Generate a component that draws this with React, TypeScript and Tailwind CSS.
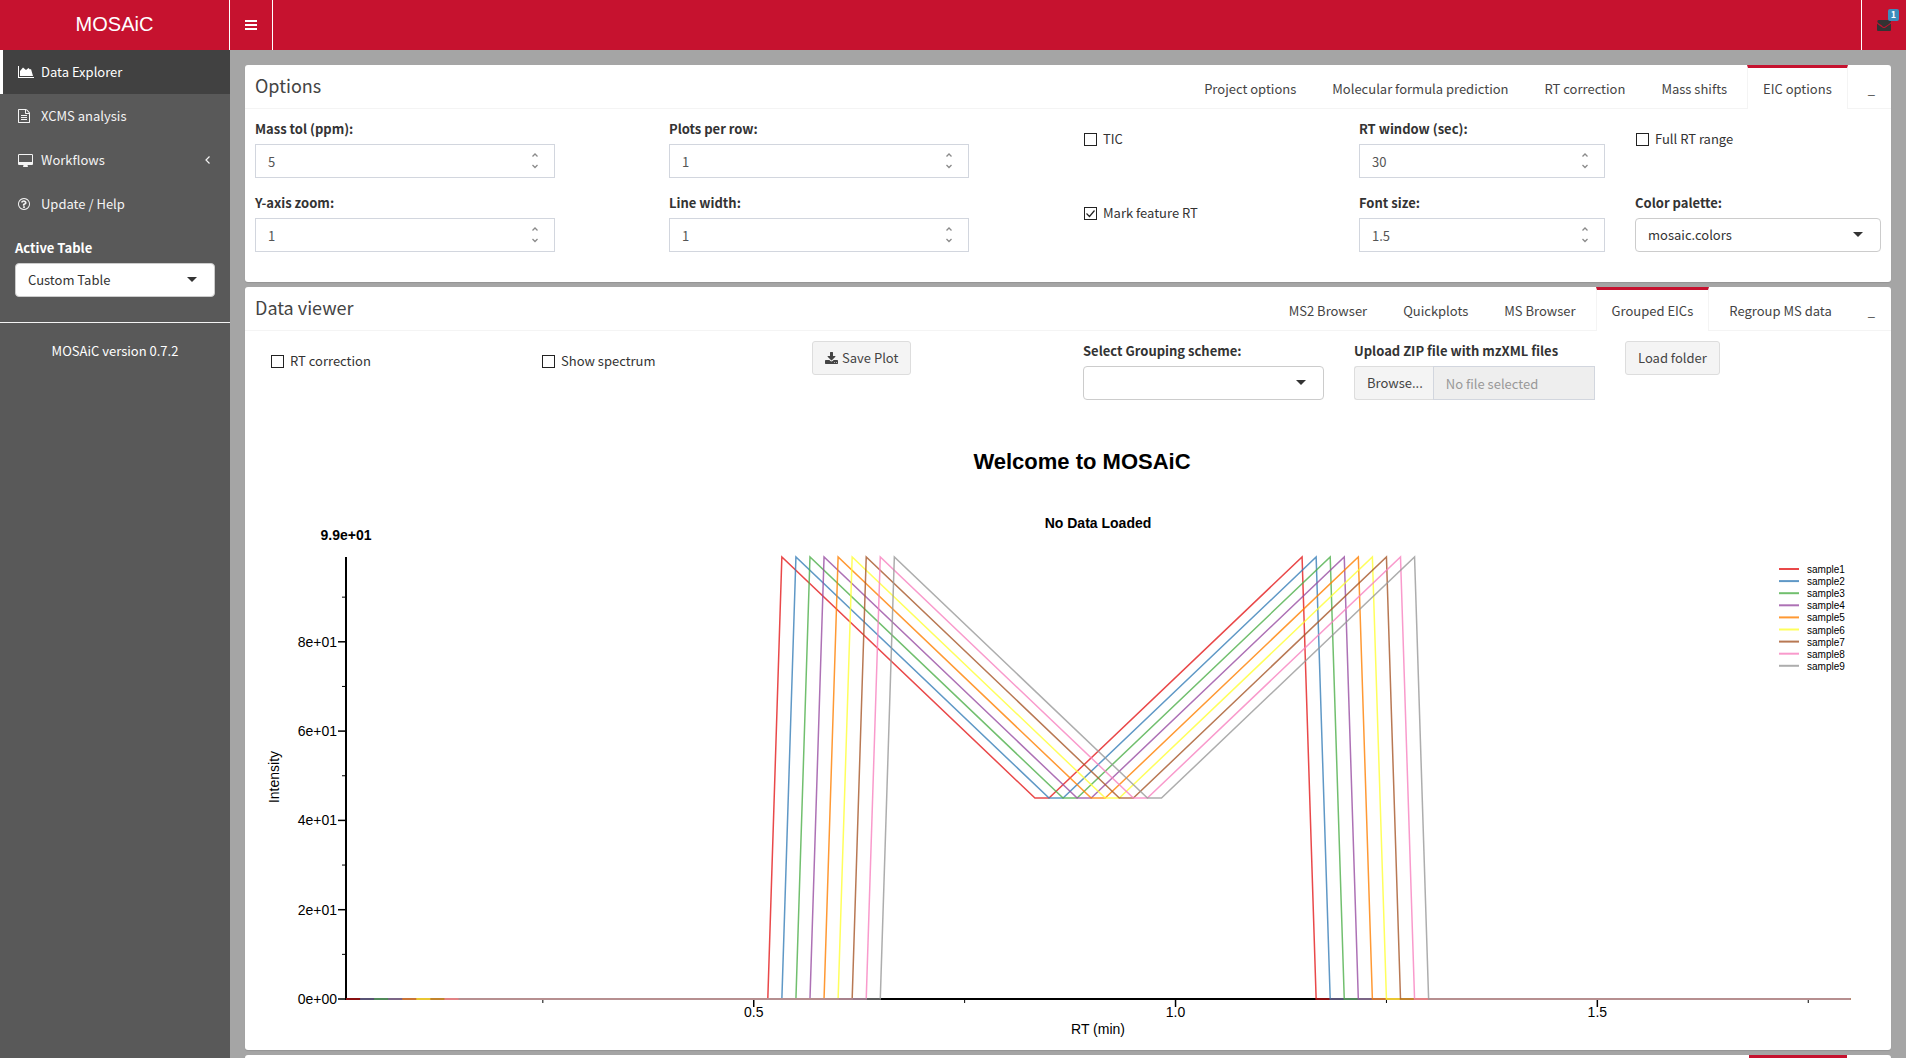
import { useState } from "react";
import clsx from "clsx";

type Sample = {
  name: string,
  color: string,
}

const samples: Sample[] = [
  { name: "sample1", color: "#e41a1c" },
  { name: "sample2", color: "#377eb8" },
  { name: "sample3", color: "#4daf4a" },
  { name: "sample4", color: "#984ea3" },
  { name: "sample5", color: "#ff7f00" },
  { name: "sample6", color: "#ffff33" },
  { name: "sample7", color: "#a65628" },
  { name: "sample8", color: "#f781bf" },
  { name: "sample9", color: "#999999" },
];

/* ---------- icons ---------- */

function AreaChartIcon() {
  return (
    <svg viewBox="0 0 2048 1536" className="h-3 w-4" fill="currentColor" aria-hidden="true">
      <path d="M2048 1408v128H0V0h128v1408h1920zM1664 384l256 896H256V640l384-448 384 320 320-256 192 192z" />
    </svg>
  );
}

function FileIcon() {
  return (
    <svg viewBox="0 0 1536 1792" className="h-3.5 w-3" fill="currentColor" aria-hidden="true">
      <path d="M1468 380q28 28 48 76t20 88v1152q0 40-28 68t-68 28H96q-40 0-68-28t-28-68V96q0-40 28-68T96 0h896q40 0 88 20t76 48zm-444-244v376h376q-10-29-22-41l-313-313q-12-12-41-22zm384 1528V640H992q-40 0-68-28t-28-68V128H128v1536h1280zM384 800q0-14 9-23t23-9h704q14 0 23 9t9 23v64q0 14-9 23t-23 9H416q-14 0-23-9t-9-23v-64zm736 224q14 0 23 9t9 23v64q0 14-9 23t-23 9H416q-14 0-23-9t-9-23v-64q0-14 9-23t23-9h704zm0 256q14 0 23 9t9 23v64q0 14-9 23t-23 9H416q-14 0-23-9t-9-23v-64q0-14 9-23t23-9h704z" />
    </svg>
  );
}

function DesktopIcon() {
  return (
    <svg viewBox="0 0 1920 1664" className="h-[13px] w-[15px]" fill="currentColor" aria-hidden="true">
      <path d="M1792 992V160q0-13-9.500-22.500T1760 128H160q-13 0-22.500 9.500T128 160v832q0 13 9.500 22.500t22.500 9.500h1600q13 0 22.500-9.500t9.500-22.500zm128-832v1088q0 66-47 113t-113 47h-544q0 37 16 77.500t32 71 16 43.500q0 26-19 45t-45 19H704q-26 0-45-19t-19-45q0-14 16-44t32-70 16-78H160q-66 0-113-47T0 1248V160Q0 94 47 47T160 0h1600q66 0 113 47t47 113z" />
    </svg>
  );
}

function HelpIcon() {
  return (
    <svg viewBox="0 0 1536 1536" className="h-3 w-3" fill="currentColor" aria-hidden="true">
      <path d="M880 1072v160q0 14-9 23t-23 9H688q-14 0-23-9t-9-23v-160q0-14 9-23t23-9h160q14 0 23 9t9 23zm214-474q0 50-15 90t-45.500 69-52 44-59.500 36q-32 18-46.500 28t-26 24-11.500 29v32q0 14-9 23t-23 9H646q-14 0-23-9t-9-23v-68q0-35 10.500-64.500t24-47.500 39-35.500 41-25.500 44.500-21q53-25 75-43t22-49q0-42-43.500-71.500T731 495q-56 0-95 27-29 20-80 83-9 12-25 12-11 0-19-6l-108-82q-10-7-12-20t5-23q122-192 349-192 129 0 238.500 89.500T1094 598zM768 128q-130 0-248.500 51t-204 136.500-136.500 204T128 768t51 248.500 136.500 204 204 136.500 248.500 51 248.500-51 204-136.500 136.500-204 51-248.500-51-248.500-136.500-204-204-136.500T768 128zm768 640q0 209-103 385.500T1153.500 1433 768 1536t-385.500-103T103 1153.500 0 768t103-385.500T382.500 103 768 0t385.500 103T1433 382.500 1536 768z" />
    </svg>
  );
}

function DownloadIcon() {
  return (
    <svg viewBox="0 0 1664 1536" className="h-3 w-[13px]" fill="currentColor" aria-hidden="true">
      <path d="M1280 1344q0-26-19-45t-45-19-45 19-19 45 19 45 45 19 45-19 19-45zm256 0q0-26-19-45t-45-19-45 19-19 45 19 45 45 19 45-19 19-45zm128-224v320q0 40-28 68t-68 28H96q-40 0-68-28t-28-68v-320q0-40 28-68t68-28h465l135 136q58 56 136 56t136-56l136-136h464q40 0 68 28t28 68zm-325-569q17 41-14 70l-448 448q-18 19-45 19t-45-19L339 621q-31-29-14-70 17-39 59-39h256V64q0-26 19-45t45-19h256q26 0 45 19t19 45v448h256q42 0 59 39z" />
    </svg>
  );
}

function EnvelopeIcon() {
  return (
    <svg viewBox="0 0 1792 1408" className="h-[11px] w-[14px]" fill="#333" aria-hidden="true">
      <path d="M1792 454v794q0 66-47 113t-113 47H160q-66 0-113-47T0 1248V454q44 49 101 87 362 246 497 345 57 42 92.500 65.500t94.500 48 110 24.500h2q51 0 110-24.500t94.500-48T1194 886q170-123 498-345 57-39 100-87zm0-294q0 79-49 151t-122 123q-376 261-468 325-10 7-42.500 30.500t-54 38-52 32.500-57.500 27-50 9h-2q-23 0-50-9t-57.500-27-52-32.500-54-38T681 759q-91-64-262-182.500T214 434q-62-42-117-115.500T42 182q0-78 41.500-130T202 0h1430q65 0 112.500 47t47.500 113z" />
    </svg>
  );
}

function Caret() {
  return (
    <svg viewBox="0 0 10 5" className="pointer-events-none absolute top-[14px] right-[18px] h-[5px] w-2.5" fill="#333" aria-hidden="true">
      <path d="M0 0h10L5 5z" />
    </svg>
  );
}

/* ---------- form controls ---------- */

function NumberField({ id, label, value }: { id: string, label: string, value: string }) {
  const [current, setCurrent] = useState(value);

  return (
    <div className="mb-[15px]">
      <label htmlFor={id} className="mb-[5px] block font-bold leading-5">{label}</label>
      <div className="relative">
        <input
          type="number"
          id={id}
          step="any"
          className="block h-[34px] w-full appearance-none border border-[#d2d6de] bg-white px-3 text-[#555] [appearance:textfield] [&::-webkit-inner-spin-button]:appearance-none"
          value={current}
          onChange={(e) => setCurrent(e.target.value)}
        />
        <svg viewBox="0 0 6 16" className="pointer-events-none absolute top-[9px] right-[17px] h-4 w-1.5" fill="none" stroke="#8a8a8a" strokeWidth="1.3" aria-hidden="true">
          <path d="M.5 3.500L3 1l2.500 2.500M.5 12L3 14.500 5.500 12" />
        </svg>
      </div>
    </div>
  );
}

function SelectBox({ id, options }: { id: string, options: string[] }) {
  return (
    <div className="relative">
      <select id={id} className="block h-[34px] w-full appearance-none rounded border border-[#ccc] bg-white px-3 text-[#333]">
        {options.map((option) => <option key={option}>{option}</option>)}
      </select>
      <Caret />
    </div>
  );
}

function CheckField({ id, label, defaultChecked = false }: { id: string, label: string, defaultChecked?: boolean }) {
  const [checked, setChecked] = useState(defaultChecked);

  return (
    <div className="mb-[15px] pt-2.5 pb-[29px]">
      <label htmlFor={id} className="flex h-5 items-center pl-px leading-5">
        <span className="relative mr-1.5 h-[13px] w-[13px]">
          <input
            type="checkbox"
            id={id}
            className="block h-[13px] w-[13px] appearance-none border border-[#222] bg-white"
            checked={checked}
            onChange={(e) => setChecked(e.target.checked)}
          />
          {checked && (
            <svg viewBox="0 0 13 13" className="pointer-events-none absolute inset-0" fill="none" stroke="#222" strokeWidth="1.2" aria-hidden="true">
              <path d="M2.500 6.500l3 3 5-6" />
            </svg>
          )}
        </span>
        {label}
      </label>
    </div>
  );
}

function Button({ children }: { children: React.ReactNode }) {
  return (
    <button type="button" className="flex h-[34px] items-center gap-1 rounded-[3px] border border-[#ddd] bg-[#f4f4f4] px-3 text-[#444]">
      {children}
    </button>
  );
}

/* ---------- boxes ---------- */

type TabBoxProps = {
  title: string,
  tabs: string[],
  active: string,
  children: React.ReactNode,
}

function TabBox({ title, tabs, active, children }: TabBoxProps) {
  return (
    <section className="mb-[5px] rounded-[3px] bg-white shadow-[0_1px_1px_rgba(0,0,0,0.1)]">
      <div className="flex h-11 justify-between border-b border-[#f4f4f4]">
        <h2 className="px-2.5 text-[18px] leading-10 text-[#444]">{title}</h2>
        <nav className="flex h-11 gap-1">
          {tabs.map((tab) => (
            <a
              key={tab}
              href="#"
              className={clsx(
                "border-x border-t-[3px] px-[15px] pt-[11px] leading-5 text-[#444]",
                tab === active ? "border-x-[#f4f4f4] border-t-[#c6122f] bg-white" : "border-transparent"
              )}
            >
              {tab}
            </a>
          ))}
        </nav>
      </div>
      <div className="p-2.5">{children}</div>
    </section>
  );
}

/* ---------- plot ---------- */

const toX = (seconds: number) => 91 + (seconds - 1) * 14.06;
const toY = (intensity: number) => 590 - intensity * 4.465;

// every trace draws the same M, one second later than the one before
const shape = [[31, 0], [32, 99], [50, 45], [51, 45], [69, 99], [70, 0]];

function tracePoints(shift: number) {
  const points = [[1, 0], ...shape, [108 - shift, 0]];
  return points.map(([s, y]) => `${toX(s + shift)},${toY(y)}`).join(" ");
}

function EicPlot() {
  return (
    <svg viewBox="0 6 1626 625" className="block w-full font-['Liberation_Sans',Arial,sans-serif] text-[14px]" role="img" aria-label="Extracted ion chromatograms">
      <text x="827" y="60" textAnchor="middle" className="text-[22px] font-bold">Welcome to MOSAiC</text>
      <text x="843" y="119" textAnchor="middle" className="font-bold">No Data Loaded</text>
      <text x="91" y="131" textAnchor="middle" className="font-bold">9.9e+01</text>

      <g stroke="#000" strokeWidth="2" fill="none">
        <path d={`M${toX(1)} ${toY(99)}V590H${toX(108)}`} />
        {[0, 20, 40, 60, 80].map((v) => <path key={v} d={`M83 ${toY(v)}h8`} strokeWidth="1.500" />)}
        {[30, 60, 90].map((s) => <path key={s} d={`M${toX(s)} 590v8`} strokeWidth="1.500" />)}
        {[10, 30, 50, 70, 90].map((v) => <path key={v} d={`M87 ${toY(v)}h4`} strokeWidth="1" />)}
        {[15, 45, 75, 105].map((s) => <path key={s} d={`M${toX(s)} 590v4`} strokeWidth="1" />)}
      </g>

      {[0, 20, 40, 60, 80].map((v) => (
        <text key={v} x="82" y={toY(v) + 5} textAnchor="end">{v / 10}e+0{v === 0 ? 0 : 1}</text>
      ))}
      {[30, 60, 90].map((s) => (
        <text key={s} x={toX(s)} y="608" textAnchor="middle">{(s / 60).toFixed(1)}</text>
      ))}
      <text x="843" y="625" textAnchor="middle">RT (min)</text>
      <text x="24" y="368" textAnchor="middle" transform="rotate(-90 24 368)">Intensity</text>

      {samples.map((sample, i) => (
        <polyline key={sample.name} points={tracePoints(i)} fill="none" stroke={sample.color} strokeOpacity="0.8" strokeWidth="1.500" />
      ))}

      {samples.map((sample, i) => (
        <g key={sample.name}>
          <path d={`M1524 ${160 + i * 12.1}h20`} stroke={sample.color} strokeOpacity="0.8" strokeWidth="2" />
          <text x="1552" y={164 + i * 12.1} className="text-[10px]">{sample.name}</text>
        </g>
      ))}
    </svg>
  );
}

/* ---------- page ---------- */

const menu = [
  { label: "Data Explorer", icon: <AreaChartIcon /> },
  { label: "XCMS analysis", icon: <FileIcon /> },
  { label: "Workflows", icon: <DesktopIcon />, nested: true },
  { label: "Update / Help", icon: <HelpIcon /> },
];

function Header() {
  return (
    <header className="flex h-[50px] bg-[#c6122f] text-white">
      <a href="#" className="w-[230px] border-r border-white text-center font-['Liberation_Sans',Arial,sans-serif] text-[20px] leading-[49px]">MOSAiC</a>
      <button type="button" aria-label="Toggle navigation" className="flex w-[43px] items-center border-r border-white pl-[15px]">
        <svg viewBox="0 0 12 10" className="h-2.5 w-3" fill="currentColor" aria-hidden="true">
          <path d="M0 0h12v2H0zM0 4h12v2H0zM0 8h12v2H0z" />
        </svg>
      </button>
      <button type="button" aria-label="Messages" className="relative ml-auto flex w-[45px] items-center border-l border-white pl-[15px]">
        <EnvelopeIcon />
        <span className="absolute top-[9px] right-[7px] h-3 rounded-[2px] bg-[#3c8dbc] px-[3px] text-[9px] font-bold leading-3">1</span>
      </button>
    </header>
  );
}

function Sidebar() {
  return (
    <aside className="w-[230px] shrink-0 bg-[#595959] text-white">
      <nav>
        {menu.map((item, i) => (
          <a
            key={item.label}
            href="#"
            className={clsx(
              "flex h-11 items-center border-l-[3px] pr-5 pl-[15px]",
              i === 0 ? "border-white bg-[#414141]" : "border-transparent text-[#f4f4f4]"
            )}
          >
            <span className="w-[23px]">{item.icon}</span>
            <span>{item.label}</span>
            {item.nested && (
              <svg viewBox="0 0 5 8" className="ml-auto h-2 w-[5px]" fill="none" stroke="currentColor" strokeWidth="1.200" aria-hidden="true">
                <path d="M4.500 .5L1 4l3.500 3.500" />
              </svg>
            )}
          </a>
        ))}
      </nav>
      <div className="border-b border-[#f4f4f4] px-[15px] pt-3 pb-[25px]">
        <label htmlFor="activeTable" className="mb-[5px] block font-bold leading-5">Active Table</label>
        <SelectBox id="activeTable" options={["Custom Table"]} />
      </div>
      <p className="pt-[18px] text-center leading-5">MOSAiC version 0.7.2</p>
    </aside>
  );
}

function Options() {
  return (
    <TabBox
      title="Options"
      tabs={["Project options", "Molecular formula prediction", "RT correction", "Mass shifts", "EIC options", "_"]}
      active="EIC options"
    >
      <div className="-mx-[15px] mb-[5px] grid grid-cols-12 *:px-[15px]">
        <div className="col-span-3 pr-[99px]!">
          <NumberField id="massTol" label="Mass tol (ppm):" value="5" />
          <NumberField id="yZoom" label="Y-axis zoom:" value="1" />
        </div>
        <div className="col-span-3 pr-[99px]!">
          <NumberField id="plotsPerRow" label="Plots per row:" value="1" />
          <NumberField id="lineWidth" label="Line width:" value="1" />
        </div>
        <div className="col-span-2">
          <CheckField id="tic" label="TIC" />
          <CheckField id="markRt" label="Mark feature RT" defaultChecked />
        </div>
        <div className="col-span-2">
          <NumberField id="rtWindow" label="RT window (sec):" value="30" />
          <NumberField id="fontSize" label="Font size:" value="1.5" />
        </div>
        <div className="col-span-2">
          <CheckField id="fullRt" label="Full RT range" />
          <label htmlFor="palette" className="mb-[5px] block font-bold leading-5">Color palette:</label>
          <SelectBox id="palette" options={["mosaic.colors"]} />
        </div>
      </div>
    </TabBox>
  );
}

function DataViewer() {
  return (
    <TabBox
      title="Data viewer"
      tabs={["MS2 Browser", "Quickplots", "MS Browser", "Grouped EICs", "Regroup MS data", "_"]}
      active="Grouped EICs"
    >
      <div className="grid grid-cols-6 *:px-[15px]">
        <CheckField id="rtCorrection" label="RT correction" />
        <CheckField id="showSpectrum" label="Show spectrum" />
        <div>
          <Button><DownloadIcon />Save Plot</Button>
        </div>
        <div>
          <label htmlFor="grouping" className="mb-[5px] block font-bold leading-5">Select Grouping scheme:</label>
          <SelectBox id="grouping" options={[""]} />
        </div>
        <div>
          <label htmlFor="zipName" className="mb-[5px] block font-bold leading-5">Upload ZIP file with mzXML files</label>
          <div className="flex">
            <button type="button" className="h-[34px] shrink-0 rounded-l-[3px] border border-r-0 border-[#ddd] bg-[#f4f4f4] pr-2.5 pl-3 text-[#444]">Browse...</button>
            <input
              type="text"
              id="zipName"
              className="h-[34px] w-full min-w-0 border border-[#d2d6de] bg-[#eee] px-3 placeholder:text-[#999]"
              placeholder="No file selected"
              readOnly
            />
          </div>
        </div>
        <div>
          <Button>Load folder</Button>
        </div>
      </div>
      <EicPlot />
    </TabBox>
  );
}

export default function App() {
  return (
    <div className="flex min-h-screen flex-col font-['Source_Sans_Pro','Noto_Sans_CJK_SC',sans-serif] text-[13px] text-[#333]">
      <Header />
      <div className="flex flex-1">
        <Sidebar />
        <main className="flex min-w-0 flex-1 flex-col bg-[#a5a5a5] px-[15px] pt-[15px]">
          <Options />
          <DataViewer />
          <section className="flex flex-1 justify-end rounded-t-[3px] bg-white pr-11">
            <div className="h-[3px] w-[98px] bg-[#c6122f]" />
          </section>
        </main>
      </div>
    </div>
  );
}
